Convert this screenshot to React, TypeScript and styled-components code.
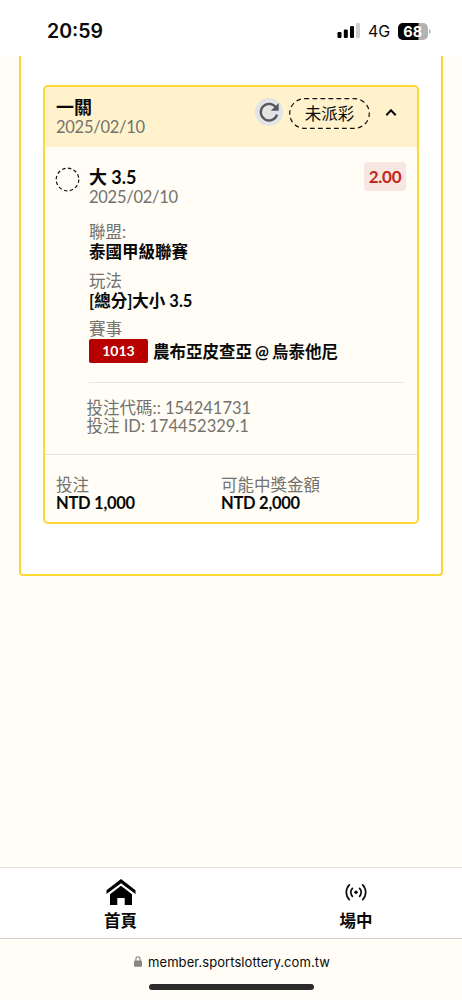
import React from "react";
import styled, { createGlobalStyle } from "styled-components";

const GlobalStyle = createGlobalStyle`
  * { box-sizing: border-box; }
  body {
    margin: 0;
    background: #fffdf5;
    color: #0a0a0a;
    font-family: Lato, "Noto Sans CJK TC", sans-serif;
    font-size: 16.5px;
  }
`;

const Screen = styled.div`
  width: 462px;
  height: 1000px;
  display: flex;
  flex-direction: column;
  overflow: hidden;
`;

const StatusBar = styled.header`
  height: 56px;
  flex: none;
  display: flex;
  align-items: center;
  padding: 6px 31px 0 47px;
  background: #fff;
  font-family: Inter, sans-serif;
`;

const Clock = styled.span`
  flex: 1;
  font-size: 19.5px;
  font-weight: 600;
  letter-spacing: 0;
`;

const Network = styled.span`
  margin: 0 7px 0 8px;
  font-size: 16px;
  width: 23px;
  letter-spacing: 0;
  white-space: nowrap;
`;

const Content = styled.main`
  flex: 1;
  padding: 0 19px;
`;

const Panel = styled.section`
  width: 424px;
  height: 520px;
  padding: 29px 22px 0;
  background: #fff;
  border: 2px solid #fdd835;
  border-top: 0;
  border-radius: 0 0 4px 4px;
`;

const Ticket = styled.article`
  width: 376px;
  height: 439px;
  display: flex;
  flex-direction: column;
  border: 2px solid #fdd835;
  border-radius: 5px;
  background: #fffdf5;
  overflow: hidden;
`;

const TicketHeader = styled.div`
  height: 60px;
  display: flex;
  background: #fff2cc;
  padding: 10px 20px 0 11px;
`;

const HeaderText = styled.div`
  flex: 1;
`;

const Line = styled.div<{ $h: number; $bold?: boolean; $size?: number; $gap?: number; $tight?: boolean }>`
  height: ${(p) => p.$h}px;
  line-height: ${(p) => p.$h}px;
  margin-top: ${(p) => p.$gap ?? 0}px;
  font-size: ${(p) => p.$size ?? 16.5}px;
  font-weight: ${(p) => (p.$bold ? 700 : 400)};
  letter-spacing: ${(p) => (p.$tight ? -0.27 : 0)}px;
  color: ${(p) => (p.$bold ? "#080808" : "#73726e")};
  white-space: nowrap;
`;

const Refresh = styled.button`
  width: 28px;
  height: 28px;
  margin: 1px 6px 0 0;
  padding: 0;
  border: 0;
  border-radius: 50%;
  background: #e2e4e6;
`;

const StatusPill = styled.div`
  position: relative;
  width: 81px;
  height: 31px;
  margin-top: 1px;
  text-align: center;
  line-height: 32px;
  font-size: 16.5px;

  svg {
    position: absolute;
    inset: 0;
  }
`;

const Chevron = styled.svg`
  margin: 11px 0 0 15px;
`;

const Selection = styled.div`
  height: 308px;
  display: flex;
  padding: 20px 11px 0 10px;
  border-bottom: 1px solid #e5e2dc;
`;

const SelectionBody = styled.div`
  width: 315px;
  margin-left: 8px;
`;

const SelectionTop = styled.div`
  display: flex;
  justify-content: space-between;
`;

const Odds = styled.div`
  width: 42px;
  height: 29px;
  margin: -5px -2px 0 0;
  border-radius: 4px;
  background: #f8e6e0;
  color: #c1271d;
  font-size: 17px;
  font-weight: 700;
  letter-spacing: -0.3px;
  line-height: 30px;
  text-align: center;
`;

const Match = styled.div`
  display: flex;
  align-items: center;
  height: 24px;
  margin-top: 0;
  font-weight: 700;
  white-space: nowrap;
  word-spacing: -1px;
`;

const MatchCode = styled.span`
  width: 59px;
  height: 24px;
  margin-right: 5px;
  border-radius: 2px;
  background: #b80000;
  color: #fff;
  font-size: 14px;
  line-height: 24px;
  text-align: center;
`;

const Reference = styled.div`
  margin-top: 19px;
  padding-top: 16px;
  border-top: 1px solid #e9e6e0;
`;

const ReferenceLines = styled.div`
  margin-left: -2.5px;
`;

const Totals = styled.div`
  display: grid;
  grid-template-columns: 165px 1fr;
  padding: 21px 11px 0;
`;

const TabBar = styled.nav`
  height: 72px;
  flex: none;
  display: flex;
  background: #fff;
  border-top: 1px solid #e5e4e2;
  border-bottom: 1px solid #cfcfcd;
`;

const Tab = styled.a<{ $offset?: number }>`
  width: 235px;
  flex: none;
  display: flex;
  flex-direction: column;
  align-items: center;
  padding: 10px 0 0 ${(p) => p.$offset ?? 0}px;
  font-size: 16.5px;
  font-weight: 700;
  line-height: 26px;

  svg {
    height: 30px;
  }
`;

const BrowserBar = styled.footer`
  height: 61px;
  flex: none;
  display: flex;
  flex-direction: column;
  align-items: center;
  font-family: Inter, sans-serif;
`;

const Address = styled.div`
  display: flex;
  align-items: center;
  gap: 6px;
  height: 45px;
  padding-left: 2px;
  font-size: 13px;
  letter-spacing: 0.07px;
`;

const HomeIndicator = styled.div`
  width: 165px;
  height: 6px;
  border-radius: 3px;
  background: #2c2b2c;
`;

const SignalIcon = () => (
  <svg width="24" height="16" viewBox="0 0 24 16">
    <rect x="1.500" y="9" width="4" height="6" rx="1.2" />
    <rect x="7.800" y="6.5" width="4" height="8.5" rx="1.2" />
    <rect x="14" y="3" width="4" height="12" rx="1.2" />
    <rect x="20" y="0" width="4" height="15" rx="1.2" fill="#d0d0d0" />
  </svg>
);

const BatteryIcon = () => (
  <svg width="33" height="17" viewBox="0 0 33 17">
    <defs>
      <clipPath id="cell">
        <rect width="30" height="17" rx="5" />
      </clipPath>
    </defs>
    <g clipPath="url(#cell)">
      <rect width="30" height="17" fill="#b3b3b3" />
      <rect width="20.5" height="17" fill="#000" />
    </g>
    <path d="M31 6v5c1-.4 1.7-1.3 1.7-2.5S32 6.400 31 6z" fill="#b3b3b3" />
    <text x="14.800" y="13.600" textAnchor="middle" fill="#fff" fontFamily="Inter" fontSize="14.500" fontWeight="700">
      68
    </text>
  </svg>
);

const RefreshIcon = () => (
  <svg width="28" height="28" viewBox="0 0 28 28" fill="none">
    <path d="M20.600 9 A8.300 8.300 0 1 0 22 16.600" stroke="#55575a" strokeWidth="2.300" />
    <path d="M23.700 5v7.700H15.800z" fill="#55575a" />
  </svg>
);

const HomeIcon = () => (
  <svg width="30" viewBox="0 0 30 30">
    <path d="M15 1 L29.500 12.300 V16 L15 5.200 L0.500 16 V12.300 Z" />
    <path d="M15 7.800 L26 16.200 V27 H18.700 V20 H11.300 V27 H4 V16.200 Z" />
  </svg>
);

const LiveIcon = () => (
  <svg width="24" viewBox="0 0 24 30" fill="none" stroke="#0a0a0a" strokeWidth="1.700" strokeLinecap="round">
    <circle cx="12" cy="14.300" r="1.700" fill="#0a0a0a" stroke="none" />
    <path d="M8.400 10.300a5.800 5.800 0 0 0 0 8M15.600 10.300a5.800 5.800 0 0 1 0 8M5.300 6.900a10.700 10.700 0 0 0 0 14.800M18.700 6.900a10.700 10.700 0 0 1 0 14.800" />
  </svg>
);

const LockIcon = () => (
  <svg width="8" height="11" viewBox="0 0 8 11">
    <rect y="4.500" width="8" height="6.300" rx="1.200" fill="#858583" />
    <path d="M1.900 5V3.200a2.100 2.400 0 0 1 4.200 0V5" fill="none" stroke="#858583" strokeWidth="1.100" />
  </svg>
);

export default function App() {
  return (
    <>
      <GlobalStyle />
      <Screen>
        <StatusBar>
          <Clock>20:59</Clock>
          <SignalIcon />
          <Network>4G</Network>
          <BatteryIcon />
        </StatusBar>
        <Content>
          <Panel>
            <Ticket>
              <TicketHeader>
                <HeaderText>
                  <Line $h={20} $size={18} $bold>一關</Line>
                  <Line $h={20} $tight>2025/02/10</Line>
                </HeaderText>
                <Refresh aria-label="重新整理">
                  <RefreshIcon />
                </Refresh>
                <StatusPill>
                  <svg width="81" height="31" fill="none">
                    <rect x="0.700" y="0.700" width="79.600" height="29.600" rx="14.800" stroke="#111" strokeWidth="1.200" strokeDasharray="4.700 3.300" />
                  </svg>
                  未派彩
                </StatusPill>
                <Chevron width="12" height="9" viewBox="0 0 12 9" fill="none">
                  <path d="M1.300 7.200 L6 2.200 L10.700 7.200" stroke="#0a0a0a" strokeWidth="2" />
                </Chevron>
              </TicketHeader>
              <Selection>
                <svg width="26" height="26" fill="none">
                  <circle cx="12.500" cy="12.500" r="11.300" stroke="#111" strokeWidth="1.200" strokeDasharray="3.500 2.420" />
                </svg>
                <SelectionBody>
                  <SelectionTop>
                    <div>
                      <Line $h={20} $size={18} $bold>大 3.5</Line>
                      <Line $h={20} $tight>2025/02/10</Line>
                    </div>
                    <Odds>2.00</Odds>
                  </SelectionTop>
                  <Line $h={20} $gap={15}>聯盟:</Line>
                  <Line $h={20} $bold>泰國甲級聯賽</Line>
                  <Line $h={20} $gap={9}>玩法</Line>
                  <Line $h={20} $bold>[總分]大小 3.5</Line>
                  <Line $h={20} $gap={8}>賽事</Line>
                  <Match>
                    <MatchCode>1013</MatchCode>
                    農布亞皮查亞 @ 烏泰他尼
                  </Match>
                  <Reference>
                    <ReferenceLines>
                      <Line $h={18}>投注代碼:: 154241731</Line>
                      <Line $h={18}>投注 ID: 174452329.1</Line>
                    </ReferenceLines>
                  </Reference>
                </SelectionBody>
              </Selection>
              <Totals>
                <div>
                  <Line $h={18}>投注</Line>
                  <Line $h={18} $bold $tight>NTD 1,000</Line>
                </div>
                <div>
                  <Line $h={18}>可能中獎金額</Line>
                  <Line $h={18} $bold $tight>NTD 2,000</Line>
                </div>
              </Totals>
            </Ticket>
          </Panel>
        </Content>
        <TabBar>
          <Tab $offset={6}>
            <HomeIcon />
            首頁
          </Tab>
          <Tab $offset={7}>
            <LiveIcon />
            場中
          </Tab>
        </TabBar>
        <BrowserBar>
          <Address>
            <LockIcon />
            member.sportslottery.com.tw
          </Address>
          <HomeIndicator />
        </BrowserBar>
      </Screen>
    </>
  );
}
